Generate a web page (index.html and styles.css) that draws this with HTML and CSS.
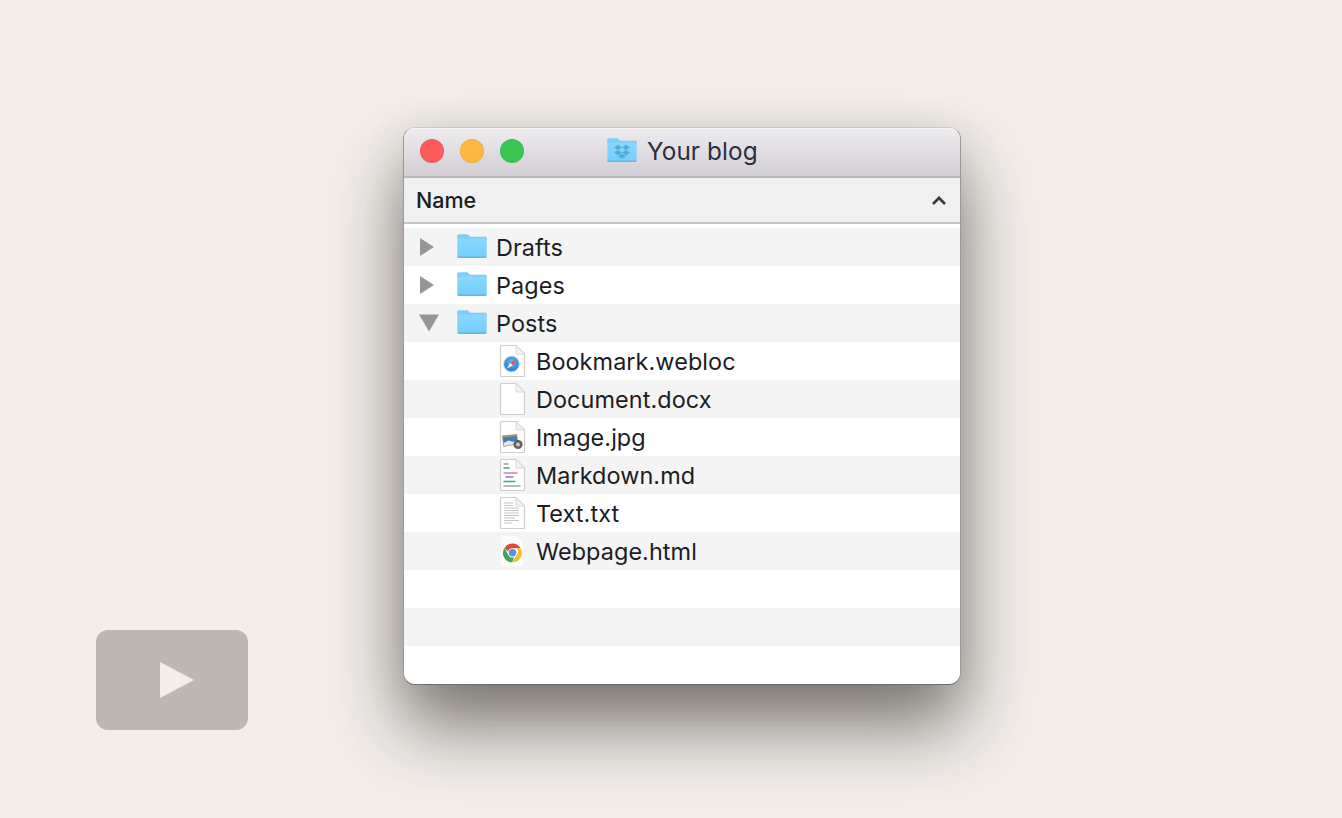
FILE: index.html
```html
<!DOCTYPE html>
<html lang="en">
<head>
<meta charset="utf-8">
<title>Your blog</title>
<link rel="stylesheet" href="styles.css">
</head>
<body>
<svg class="defs" width="0" height="0" aria-hidden="true">
  <defs>
    <linearGradient id="fb" x1="0" y1="0" x2="0" y2="1">
      <stop offset="0" stop-color="#88d8fe"/>
      <stop offset="1" stop-color="#74cdfb"/>
    </linearGradient>
    <radialGradient id="sky" cx=".5" cy=".35" r=".7">
      <stop offset="0" stop-color="#5fb8ee"/>
      <stop offset="1" stop-color="#1f78c8"/>
    </radialGradient>
    <symbol id="folder" viewBox="0 0 30 26">
      <path d="M.3 6V3.100C.3 2.200 1 1.500 1.900 1.500H10c.8 0 1.200.3 1.700.9L13 3.900h15.100c.9 0 1.600.7 1.600 1.600v1.500z" fill="#7ccdf9" stroke="#73c3f0" stroke-width=".4"/>
      <rect x=".3" y="5.500" width="29.400" height="19.500" rx="1.400" fill="url(#fb)"/>
      <path d="M.3 23.400v.2c0 .8.600 1.400 1.400 1.400h26.600c.8 0 1.400-.6 1.400-1.400v-.2z" fill="#62b6e6"/>
    </symbol>
    <symbol id="page" viewBox="0 0 28 34">
      <path d="M3.500 1.500H18L26.500 10v21.500c0 .6-.4 1-1 1h-22c-.6 0-1-.4-1-1v-29c0-.6.4-1 1-1z" fill="#fff" stroke="#cdcdcd" stroke-width="1.200"/>
      <path d="M18 1.500V9c0 .6.400 1 1 1h7.500z" fill="#f2f2f2" stroke="#d2d2d2" stroke-width=".8"/>
    </symbol>
  </defs>
</svg>

<main class="window">
  <header class="titlebar">
    <div class="lights">
      <span class="light red"></span>
      <span class="light yellow"></span>
      <span class="light green"></span>
    </div>
    <div class="title">
      <svg class="title-icon" viewBox="0 0 30 26">
        <use href="#folder"/>
        <path d="M11 7.800l4 2.600-4 2.600-4-2.600zM19 7.800l4 2.600-4 2.600-4-2.600zM11 13l4 2.600-4 2.600-4-2.600zM19 13l4 2.600-4 2.600-4-2.600zM15 16.800l4 2.400-4 2.600-4-2.600z" fill="#4f9fd3" fill-opacity=".85"/>
      </svg>
      <span>Your blog</span>
    </div>
  </header>
  <div class="colhead">
    <span>Name</span>
    <svg class="chevron" viewBox="0 0 14 10"><path d="M1.500 8.200L7 2.700l5.500 5.500" fill="none" stroke="#3a3a3a" stroke-width="2.400"/></svg>
  </div>
  <ul class="rows">
    <li class="row">
      <svg class="disc" viewBox="0 0 20 20"><path d="M3 1l14 9-14 9z" fill="#969696"/></svg>
      <svg class="folder" viewBox="0 0 30 26"><use href="#folder"/></svg>
      <span>Drafts</span>
    </li>
    <li class="row">
      <svg class="disc" viewBox="0 0 20 20"><path d="M3 1l14 9-14 9z" fill="#969696"/></svg>
      <svg class="folder" viewBox="0 0 30 26"><use href="#folder"/></svg>
      <span>Pages</span>
    </li>
    <li class="row">
      <svg class="disc disc-open" viewBox="0 0 20 20"><path d="M0 1.500h20l-10 17z" fill="#969696"/></svg>
      <svg class="folder" viewBox="0 0 30 26"><use href="#folder"/></svg>
      <span>Posts</span>
    </li>
    <li class="row file">
      <svg class="doc" viewBox="0 0 28 34">
        <use href="#page"/>
        <circle cx="13.500" cy="20" r="7.800" fill="url(#sky)" stroke="#c4d6e4" stroke-width=".8"/>
        <path d="M18 15.500l-5.800 3.300 2.700 2.600z" fill="#f0503f"/>
        <path d="M9 24.500l3.200-5.700 2.700 2.600z" fill="#f4f7fa"/>
      </svg>
      <span>Bookmark.webloc</span>
    </li>
    <li class="row file">
      <svg class="doc" viewBox="0 0 28 34"><use href="#page"/></svg>
      <span>Document.docx</span>
    </li>
    <li class="row file">
      <svg class="doc" viewBox="0 0 28 34">
        <use href="#page"/>
        <path d="M4 15.500l15-1.500 1.500 10L5.500 27z" fill="#a8946a"/>
        <path d="M5 17.500l13.500-1.500 1 6.500L6 25z" fill="#3f7dc4"/>
        <path d="M5.700 23l4.800-2.500 4 1.200 5-1 .4 2.800L6.300 26z" fill="#e4e9ee"/>
        <circle cx="20" cy="24.500" r="4.600" fill="#66625c"/>
        <circle cx="20" cy="24.500" r="2" fill="#c9c9c9"/>
      </svg>
      <span>Image.jpg</span>
    </li>
    <li class="row file">
      <svg class="doc" viewBox="0 0 28 34">
        <use href="#page"/>
        <path d="M5.500 6h5" stroke="#a2a2a2" stroke-width="1.600"/>
        <path d="M5.500 10h6" stroke="#3fa9ad" stroke-width="1.600"/>
        <path d="M5.500 15h14" stroke="#d68d93" stroke-width="1.600"/>
        <path d="M7.500 19h8" stroke="#a672e6" stroke-width="1.600"/>
        <path d="M5.500 23.500h12" stroke="#3fa9ad" stroke-width="1.600"/>
        <path d="M5.500 28h17" stroke="#a8a8a8" stroke-width="1.600"/>
      </svg>
      <span>Markdown.md</span>
    </li>
    <li class="row file">
      <svg class="doc" viewBox="0 0 28 34">
        <use href="#page"/>
        <path d="M6 7h9M6 9.500h9M6 12h15M6 14.500h15M6 17h15M6 19.500h15M6 22h11M6 24.500h15M6 27h8" stroke="#bdbdbd" stroke-width=".9"/>
      </svg>
      <span>Text.txt</span>
    </li>
    <li class="row file">
      <svg class="doc" viewBox="0 0 28 34">
        <path d="M2 1h17l7 8v24H2z" fill="#fbfbfb" stroke="#efefef"/>
        <path d="M14.500 9.500a9.300 9.300 0 0 1 8.100 4.700h-8.100a4.700 4.700 0 0 0-4.500 3.300L6.400 14a9.300 9.300 0 0 1 8.100-4.500z" fill="#dd4a3c"/>
        <path d="M22.600 14.200a9.300 9.300 0 0 1-8.400 14.100l4.100-7a4.700 4.700 0 0 0 .5-7.100z" fill="#f2c230"/>
        <path d="M14.200 28.300A9.300 9.300 0 0 1 6.400 14l4 6.900a4.700 4.700 0 0 0 5.700 2.400z" fill="#3fa653"/>
        <circle cx="14.500" cy="18.800" r="3.700" fill="#5b8fe6"/>
      </svg>
      <span>Webpage.html</span>
    </li>
    <li class="row"></li>
    <li class="row"></li>
    <li class="row"></li>
  </ul>
</main>

<div class="play">
  <svg class="play-icon" viewBox="0 0 34 36"><path d="M0 0l34 18L0 36z" fill="#f3eeea"/></svg>
</div>
</body>
</html>
```
FILE: styles.css
```css
* { box-sizing: border-box; }
html, body { margin: 0; height: 100%; }
body {
  position: relative;
  background: #f3eeea;
  font-family: "Inter", "Noto Sans", "Liberation Sans", sans-serif;
  overflow: hidden;
  padding: 127px 0 0 403px;
}
.defs { position: absolute; }
.window {
  width: 558px;
  height: 558px;
  background: #fff;
  border: 1px solid #9b9896;
  border-top-color: #c9c6c3;
  border-bottom-color: #6f6d6b;
  border-radius: 12px;
  overflow: hidden;
  box-shadow: 0 42px 72px rgba(40, 34, 28, .56), 0 10px 44px rgba(60, 50, 40, .12);
  display: flex;
  flex-direction: column;
}
.titlebar {
  flex: none;
  height: 50px;
  display: flex;
  align-items: center;
  padding: 0 0 2px 16px;
  position: relative;
  border-bottom: 2px solid #bbb9b8;
  background: linear-gradient(#eeecef, #d1cfd3);
  box-shadow: inset 0 1px 0 #f6f5f6;
}
.lights { display: flex; gap: 16px; }
.light {
  width: 24px;
  height: 24px;
  border-radius: 50%;
  border: 1px solid rgba(0, 0, 0, .06);
}
.red { background: #fc5d5c; }
.yellow { background: #fdb843; }
.green { background: #3bc651; }
.title {
  position: absolute;
  left: 203px;
  top: 5px;
  height: 36px;
  display: flex;
  align-items: center;
  gap: 10px;
  font-size: 24.300px;
  color: #2c2c42;
  letter-spacing: .1px;
}
.title-icon { width: 30px; height: 26px; margin-top: -3px; }
.colhead {
  flex: none;
  height: 46px;
  display: flex;
  align-items: center;
  justify-content: space-between;
  padding: 0 13px 0 12px;
  background: #f0f0f0;
  border-bottom: 2px solid #c5c5c5;
  font-size: 21.500px;
  font-weight: 500;
  color: #1c1c1c;
}
.chevron { width: 16px; height: 11px; }
.rows {
  list-style: none;
  margin: 4px 0 0;
  padding: 0;
  flex: 1;
  overflow: hidden;
}
.row {
  height: 38px;
  display: flex;
  align-items: center;
  font-size: 23.450px;
  letter-spacing: .06px;
  color: #1d1d1f;
  padding-left: 13px;
}
.row:nth-child(odd) { background: #f4f4f4; }
.disc { width: 20px; height: 20px; flex: none; margin-right: 20px; }
.disc-open { margin-left: 2px; margin-right: 18px; }
.folder { width: 30px; height: 26px; flex: none; margin-right: 9px; margin-top: -2px; }
.file { padding-left: 94px; }
.doc { width: 28px; height: 34px; flex: none; margin-right: 10px; }
.play {
  position: absolute;
  left: 96px;
  top: 630px;
  width: 152px;
  height: 100px;
  border-radius: 12px;
  background: #bfb7b2;
  display: flex;
  align-items: center;
  justify-content: center;
}
.play-icon { width: 34px; height: 36px; margin-left: 10px; }
```
